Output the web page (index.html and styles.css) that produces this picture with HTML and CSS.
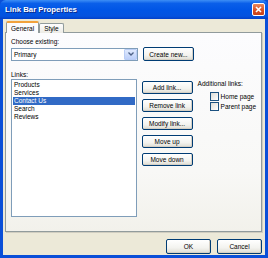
FILE: index.html
```html
<!DOCTYPE html>
<html lang="en">
<head>
  <meta charset="UTF-8">
  <title>Link Bar Properties</title>
  <link rel="stylesheet" href="styles.css">
</head>
<body>
  <div class="window">
    <div class="titlebar">
      <span class="title">Link Bar Properties</span>
      <span class="close">
        <svg width="7" height="7" viewBox="0 0 7 7"><path d="M1 1 L6 6 M6 1 L1 6" stroke="#fff" stroke-width="1.6"/></svg>
      </span>
    </div>
    <div class="body">
      <div class="tabs">
        <div class="tab active">General</div>
        <div class="tab">Style</div>
      </div>
      <div class="panel">
        <div class="label">Choose existing:</div>
        <div class="row">
          <div class="select">
            <span>Primary</span>
            <span class="arrow">
              <svg width="6" height="4" viewBox="0 0 6 4"><path d="M0.5 0.5 L3 3 L5.5 0.5" fill="none" stroke="#4d6185" stroke-width="1.3"/></svg>
            </span>
          </div>
          <button class="btn">Create new...</button>
        </div>
        <div class="label links-label">Links:</div>
        <div class="links-row">
          <ul class="listbox">
            <li>Products</li>
            <li>Services</li>
            <li class="selected">Contact Us</li>
            <li>Search</li>
            <li>Reviews</li>
          </ul>
          <div class="btn-col">
            <button class="btn">Add link...</button>
            <button class="btn">Remove link</button>
            <button class="btn">Modify link...</button>
            <button class="btn">Move up</button>
            <button class="btn">Move down</button>
          </div>
          <div class="extra">
            <div class="extra-title">Additional links:</div>
            <label class="check"><span class="box"></span>Home page</label>
            <label class="check"><span class="box"></span>Parent page</label>
          </div>
        </div>
      </div>
      <div class="footer">
        <button class="btn big">OK</button>
        <button class="btn big">Cancel</button>
      </div>
    </div>
  </div>
</body>
</html>
```

FILE: styles.css
```css
body {
  margin: 0;
  font-family: "Liberation Sans", Arial, sans-serif;
  font-size: 6.5px;
  color: #000;
}

.window {
  width: 268px;
  height: 258px;
  box-sizing: border-box;
  display: flex;
  flex-direction: column;
  background: #0a50dc;
  border: 3px solid #0a4fd8;
  border-top: none;
}

/* title bar */
.titlebar {
  height: 19px;
  margin: 0 -3px;
  padding: 0 3px 0 5px;
  display: flex;
  align-items: center;
  justify-content: space-between;
  background: linear-gradient(#3d8ef5 0%, #0a5fe9 18%, #0055e5 55%, #0453df 85%, #0340c8 100%);
  border-radius: 6px 6px 0 0;
}

.title {
  color: #fff;
  font-weight: bold;
  font-size: 7.8px;
  text-shadow: 1px 1px 0 #0a2a8a;
}

.close {
  width: 13px;
  height: 13px;
  box-sizing: border-box;
  border: 1px solid #fff;
  border-radius: 2px;
  background: linear-gradient(#e9895e, #d74d22 60%, #c4411c);
  display: flex;
  align-items: center;
  justify-content: center;
}

/* dialog body */
.body {
  flex: 1;
  background: #ece9d8;
  padding: 3px 3px 0 2px;
  display: flex;
  flex-direction: column;
}

.tabs {
  display: flex;
  align-items: flex-end;
  height: 11px;
  position: relative;
  z-index: 1;
  margin-bottom: -1px;
}

.tab {
  height: 9px;
  padding: 0 4px;
  line-height: 9px;
  border: 1px solid #919b9c;
  border-bottom: none;
  border-radius: 2px 2px 0 0;
  background: linear-gradient(#fefefe, #ecebe5);
}

.tab.active {
  line-height: 11px;
  padding: 0 4px 0 4px;
  margin-left: 1px;
  border-top: 2px solid #f2a23c;
  background: #fcfcfe;
  height: 10px;
}

.panel {
  height: 194px;
  border: 1px solid #919b9c;
  background: linear-gradient(#fcfcfe 0%, #f8f8f6 70%, #f2f1eb 100%);
  padding: 4px 5px 0 5px;
  box-shadow: 1px 1px 0 #d0cdc0;
}

.label {
  line-height: 9px;
}

.row {
  display: flex;
  align-items: center;
  gap: 5px;
  margin-top: 1px;
}

.select {
  width: 127px;
  height: 13px;
  box-sizing: border-box;
  border: 1px solid #7f9db9;
  background: #fff;
  display: flex;
  align-items: center;
  justify-content: space-between;
  padding-left: 2px;
}

.arrow {
  width: 13px;
  height: 11px;
  box-sizing: border-box;
  border: 1px solid #b9cdf5;
  border-radius: 1px;
  background: linear-gradient(#dfe9fd, #bccff9);
  display: flex;
  align-items: center;
  justify-content: center;
}

.btn {
  font-family: inherit;
  font-size: 6.5px;
  color: #000;
  width: 51px;
  height: 14px;
  padding: 0;
  border: 1px solid #003c74;
  border-radius: 2px;
  background: linear-gradient(#ffffff, #f3f3ef 60%, #dedcd2);
  box-shadow: inset -1px -1px 0 #d6d0c5;
}

.links-label {
  margin-top: 9px;
}

.links-row {
  display: flex;
  align-items: flex-start;
  gap: 5px;
}

.listbox {
  list-style: none;
  margin: 0;
  width: 127px;
  height: 138px;
  box-sizing: border-box;
  border: 1px solid #7f9db9;
  background: #fff;
  padding: 1px;
}

.listbox li {
  line-height: 8px;
  padding-left: 1px;
}

.listbox li.selected {
  background: #316ac5;
  color: #fff;
}

.btn-col {
  display: flex;
  flex-direction: column;
  gap: 5px;
  margin-top: 2px;
}

.btn-col .btn {
  height: 13px;
}

.extra {
  flex: none;
  white-space: nowrap;
  padding-top: 1px;
}

.extra-title {
  line-height: 8px;
  margin-bottom: 3px;
}

.check {
  display: flex;
  align-items: center;
  gap: 2px;
  margin-left: 12px;
  height: 10px;
}

.box {
  flex: none;
  width: 7px;
  height: 7px;
  border: 1px solid #1c5180;
  background: linear-gradient(135deg, #dcdcd7, #fff);
}

.footer {
  flex: 1;
  display: flex;
  justify-content: flex-end;
  align-items: flex-start;
  gap: 6px;
  padding-top: 7px;
}

.btn.big {
  width: 45px;
  height: 15px;
}
```
